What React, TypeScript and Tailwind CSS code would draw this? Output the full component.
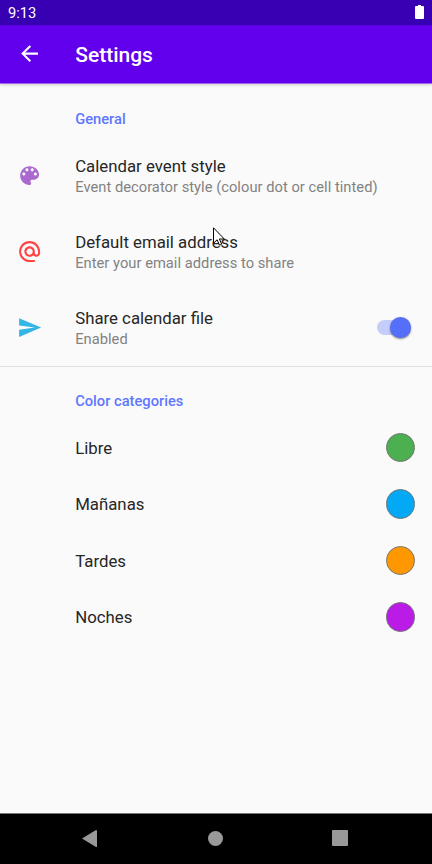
import type { ReactNode } from "react";

const ARROW = "M20 11H7.83l5.59-5.59L12 4l-8 8 8 8 1.41-1.41L7.83 13H20v-2z";
const PALETTE =
  "M12 3c-4.97 0-9 4.03-9 9s4.03 9 9 9c.83 0 1.5-.67 1.5-1.5 0-.39-.15-.74-.39-1.01-.23-.26-.38-.61-.38-.99 0-.83.67-1.5 1.5-1.5H16c2.76 0 5-2.24 5-5 0-4.42-4.03-8-9-8zm-5.5 9c-.83 0-1.5-.67-1.5-1.5S5.67 9 6.5 9 8 9.67 8 10.5 7.33 12 6.5 12zm3-4C8.67 8 8 7.33 8 6.5S8.67 5 9.5 5s1.5.67 1.5 1.5S10.33 8 9.5 8zm5 0c-.83 0-1.5-.67-1.5-1.5S13.67 5 14.5 5s1.5.67 1.5 1.5S15.33 8 14.5 8zm3 4c-.83 0-1.5-.67-1.5-1.5S16.67 9 17.5 9s1.5.67 1.5 1.5-.67 1.5-1.5 1.5z";
const AT =
  "M12 1.95c-5.52 0-10 4.48-10 10s4.48 10 10 10h5v-2h-5c-4.34 0-8-3.66-8-8s3.66-8 8-8 8 3.66 8 8v1.43c0 .79-.71 1.57-1.5 1.57s-1.5-.78-1.5-1.57v-1.43c0-2.76-2.24-5-5-5s-5 2.24-5 5 2.24 5 5 5c1.38 0 2.64-.56 3.54-1.47.65.89 1.77 1.47 2.96 1.47 1.97 0 3.5-1.6 3.5-3.57v-1.43c0-5.52-4.48-10-10-10zm0 13c-1.66 0-3-1.34-3-3s1.34-3 3-3 3 1.34 3 3-1.34 3-3 3z";
const SEND = "M2.01 21L23 12 2.01 3 2 10l15 2-15 2z";

function Icon({ d, className }: { d: string; className: string }) {
  return (
    <svg viewBox="0 0 24 24" className={`size-[25.2px] shrink-0 fill-current ${className}`}>
      <path d={d} />
    </svg>
  );
}

function Preference({ icon, title, summary, children }: { icon: ReactNode; title: string; summary: string; children?: ReactNode }) {
  return (
    <div className="flex h-[76.2px] items-center pr-[17px] pl-[16.8px]">
      <div className="flex w-[58.4px] shrink-0">{icon}</div>
      <div className="flex-1 pt-[3.6px] whitespace-nowrap">
        <div className="text-[16.8px] leading-[21px] text-[#262626]">{title}</div>
        <div className="text-[14.7px] leading-[21px] tracking-[0.03px] text-[#828282]">{summary}</div>
      </div>
      {children}
    </div>
  );
}

function Category({ name, color }: { name: string; color: string }) {
  return (
    <div className="flex h-[56.4px] items-center justify-between pr-[17px] pl-[75.2px]">
      <span className="text-[16.8px] leading-[22px] text-[#262626]">{name}</span>
      <span className={`size-[29.4px] rounded-full border border-[#757575] ${color}`} />
    </div>
  );
}

export default function App() {
  return (
    <div className="relative flex h-[864px] w-[432px] flex-col overflow-hidden bg-[#fafafa] font-[Roboto,sans-serif]">
      <div className="flex h-[25px] shrink-0 items-center justify-between bg-[#3700b3] pr-[8px] pl-[8px] text-white">
        <span className="pt-[2px] text-[14.7px] leading-[23px]">9:13</span>
        <svg viewBox="0 0 9 14" className="mb-px h-[14px] w-[9px] fill-white">
          <path d="M3 0h3v1h2q1 0 1 1v11q0 1-1 1H1q-1 0-1-1V2q0-1 1-1h2z" />
        </svg>
      </div>
      <header className="z-10 flex h-[59px] shrink-0 items-center border-b border-[#a067ea] bg-[#6200ee] pl-[16.8px] text-white shadow-[0_1px_3px_rgba(0,0,0,0.18)]">
        <div className="w-[58.4px]">
          <Icon d={ARROW} className="text-white" />
        </div>
        <h1 className="pt-[2px] text-[21px] leading-[28px] font-medium">Settings</h1>
      </header>

      <main className="flex flex-1 flex-col">
        <h2 className="mt-[25.4px] pl-[75.2px] text-[14.7px] leading-[20px] font-medium text-[#5f78fe]">General</h2>
        <div className="mt-[7.8px]">
          <Preference icon={<Icon d={PALETTE} className="text-[#ab68cf]" />} title="Calendar event style" summary="Event decorator style (colour dot or cell tinted)" />
          <Preference icon={<Icon d={AT} className="text-[#ff4444]" />} title="Default email address" summary="Enter your email address to share" />
          <Preference icon={<Icon d={SEND} className="text-[#33b5e5]" />} title="Share calendar file" summary="Enabled">
            <div className="mr-[4px] flex h-[14.5px] w-[34px] items-center justify-end rounded-full bg-[#c5cdfb]">
              <div className="size-[21px] shrink-0 rounded-full bg-[#566ffa] shadow-[0_1px_2px_rgba(0,0,0,0.5)]" />
            </div>
          </Preference>
        </div>
        <hr className="h-px border-0 bg-[#dedede]" />
        <h2 className="mt-[24.2px] mb-[8.6px] pl-[75.2px] text-[14.7px] leading-[20px] font-medium text-[#5f78fe]">Color categories</h2>
        <Category name="Libre" color="bg-[#4caf50]" />
        <Category name="Mañanas" color="bg-[#03a9f4]" />
        <Category name="Tardes" color="bg-[#ff9800]" />
        <Category name="Noches" color="bg-[#ba1be6]" />
      </main>

      <nav className="flex h-[51px] shrink-0 items-center border-t border-[#777] bg-black pb-[2px] pl-[82px]">
        <svg viewBox="0 0 15 17" className="h-[17px] w-[15px] fill-[#999]">
          <path d="M0 8.5 14 0q1 0 1 .5v16q0 .5-1 .5z" />
        </svg>
        <span className="ml-[111px] size-[15px] rounded-full bg-[#999]" />
        <span className="ml-[109px] size-[16px] rounded-[1px] bg-[#999]" />
      </nav>

      <svg viewBox="0 0 12 19" className="absolute top-[227px] left-[213px] h-[19px] w-[12px]">
        <path d="M.5.8v15.4l3.6-3.4 2.4 5.4 2.2-1-2.3-5.2h4.9z" fill="#fff" stroke="#000" strokeWidth="1" />
      </svg>
    </div>
  );
}
